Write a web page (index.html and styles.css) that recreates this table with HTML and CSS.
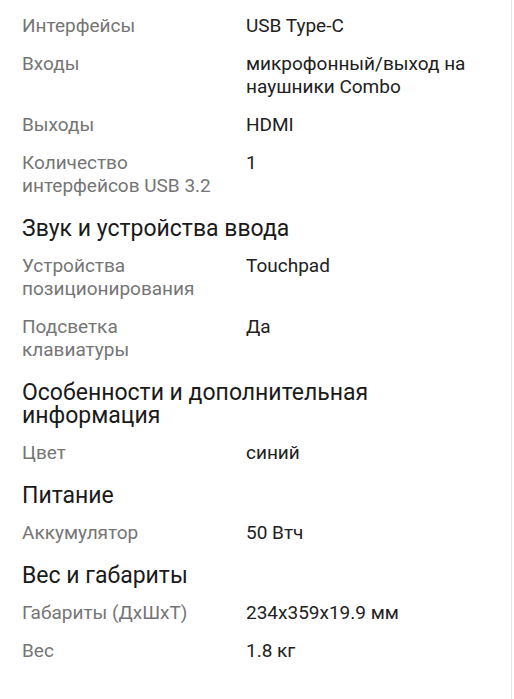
FILE: index.html
```html
<!DOCTYPE html>
<html lang="ru">
<head>
<meta charset="utf-8">
<link rel="stylesheet" href="styles.css">
</head>
<body>
<div class="page">
  <div class="row"><div class="label">Интерфейсы</div><div class="value">USB Type-C</div></div>
  <div class="row"><div class="label">Входы</div><div class="value">микрофонный/выход на наушники Combo</div></div>
  <div class="row"><div class="label">Выходы</div><div class="value">HDMI</div></div>
  <div class="row"><div class="label">Количество интерфейсов USB 3.2</div><div class="value">1</div></div>

  <h2 class="heading">Звук и устройства ввода</h2>
  <div class="row"><div class="label">Устройства позиционирования</div><div class="value">Touchpad</div></div>
  <div class="row"><div class="label">Подсветка клавиатуры</div><div class="value">Да</div></div>

  <h2 class="heading">Особенности и дополнительная информация</h2>
  <div class="row"><div class="label">Цвет</div><div class="value">синий</div></div>

  <h2 class="heading">Питание</h2>
  <div class="row"><div class="label">Аккумулятор</div><div class="value">50 Втч</div></div>

  <h2 class="heading">Вес и габариты</h2>
  <div class="row"><div class="label">Габариты (ДхШхТ)</div><div class="value">234x359x19.9 мм</div></div>
  <div class="row"><div class="label">Вес</div><div class="value">1.8 кг</div></div>
</div>
</body>
</html>
```

FILE: styles.css
```css
html, body {
  margin: 0;
  padding: 0;
  background: #ffffff;
}
body {
  font-family: Roboto, "Noto Sans", sans-serif;
  color: #212121;
}
.page {
  width: 512px;
  min-height: 699px;
  box-sizing: border-box;
  border-right: 1px solid #e6e6e6;
  padding: 7px 22px 0 22px;
}
.row {
  display: grid;
  grid-template-columns: 224px 1fr;
  padding: 7px 0 8px;
  font-size: 19px;
  line-height: 23px;
}
.label {
  color: #757575;
  padding-right: 26px;
}
.value {
  color: #212121;
  padding-right: 12px;
}
.heading {
  margin: 12px 0 7px;
  font-size: 23px;
  line-height: 23px;
  font-weight: 400;
  color: #1a1a1a;
  padding-right: 100px;
}
```
